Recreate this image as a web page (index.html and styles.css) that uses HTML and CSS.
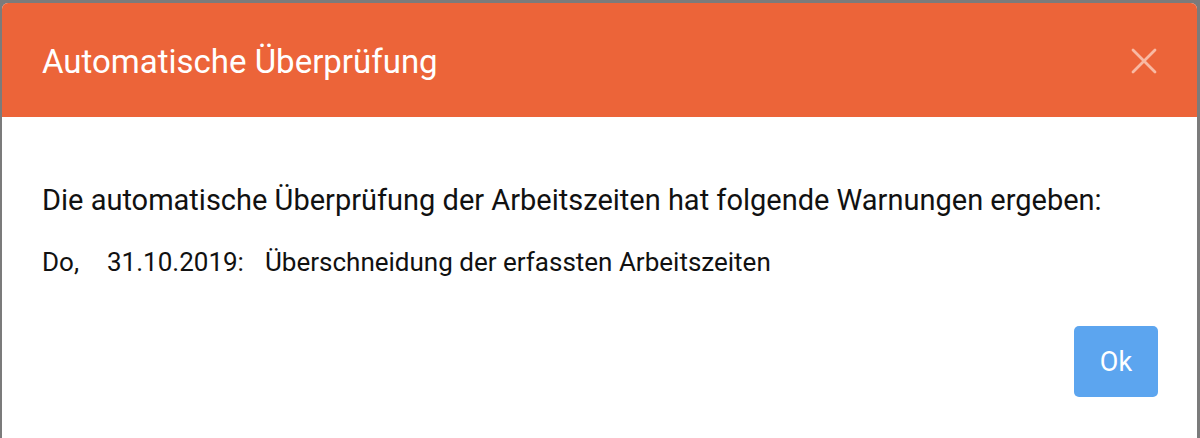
FILE: index.html
```html
<!DOCTYPE html>
<html lang="de">
<head>
    <meta charset="UTF-8">
    <meta name="viewport" content="width=device-width, initial-scale=1.0">
    <title>Automatische Überprüfung</title>
    <link rel="stylesheet" href="styles.css">
</head>
<body>
    <div class="modal">
        <div class="modal-header">
            <h2>Automatische Überprüfung</h2>
            <button class="close" aria-label="Schließen">
                <svg width="26" height="26" viewBox="0 0 26 26">
                    <path d="M2 2 L24 24 M24 2 L2 24" stroke="currentColor" stroke-width="2.8" stroke-linecap="round"/>
                </svg>
            </button>
        </div>
        <div class="modal-body">
            <p class="intro">Die automatische Überprüfung der Arbeitszeiten hat folgende Warnungen ergeben:</p>
            <div class="warnung">
                <span class="tag">Do,</span>
                <span class="datum">31.10.2019:</span>
                <span class="text">Überschneidung der erfassten Arbeitszeiten</span>
            </div>
        </div>
        <div class="modal-footer">
            <button class="ok">Ok</button>
        </div>
    </div>
</body>
</html>
```

FILE: styles.css
```css
body {
    margin: 0;
    background-color: #7b7b7b;
    font-family: Roboto, "Noto Sans", sans-serif;
    height: 438px;
    overflow: hidden;
}
.modal {
    margin: 3px 3px 0 2px;
    background-color: white;
    border-radius: 6px 6px 0 0;
    height: 440px;
    overflow: hidden;
}
.modal-header {
    background-color: #ec6439;
    height: 114px;
    display: flex;
    align-items: center;
    justify-content: space-between;
    padding: 2px 40px 0 40px;
    box-sizing: border-box;
}
.modal-header h2 {
    margin: 0;
    color: white;
    font-size: 33px;
    font-weight: normal;
}
.close {
    background: none;
    border: none;
    padding: 0;
    color: #f8b9a3;
    display: flex;
}
.modal-body {
    padding: 66px 40px 0 40px;
    color: #111;
}
.intro {
    margin: 0;
    font-size: 29px;
}
.warnung {
    margin-top: 30px;
    font-size: 26px;
    display: flex;
}
.warnung .tag {
    width: 65px;
}
.warnung .datum {
    width: 158px;
}
.modal-footer {
    display: flex;
    justify-content: flex-end;
    padding: 49px 39px 0 0;
}
.ok {
    width: 84px;
    height: 71px;
    background-color: #5ca5ef;
    color: white;
    border: none;
    border-radius: 5px;
    font-family: Roboto, "Noto Sans", sans-serif;
    font-size: 27px;
}
```
